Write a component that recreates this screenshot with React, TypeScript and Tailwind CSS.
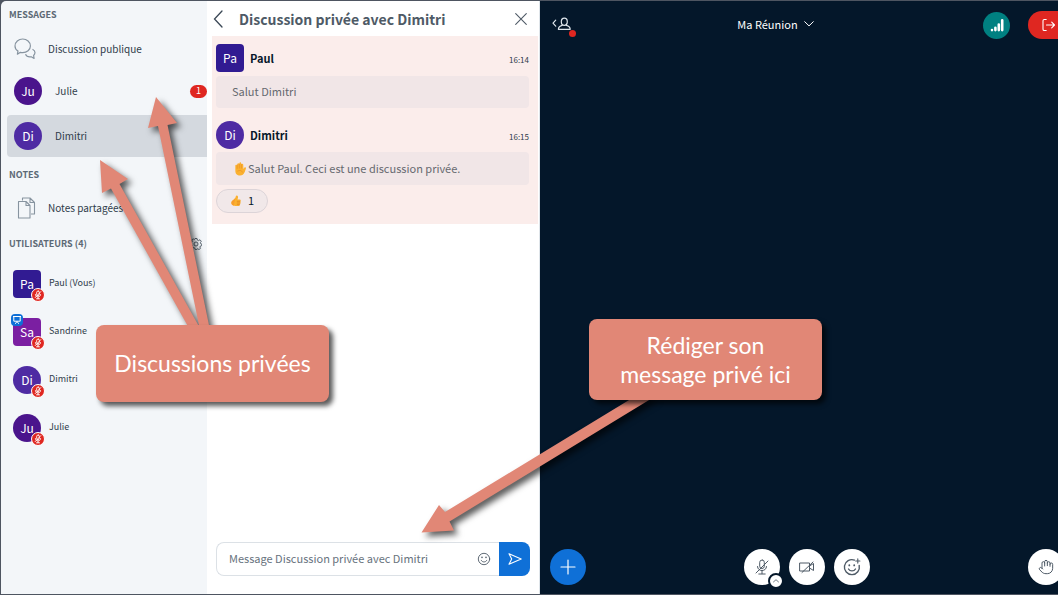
import type { ReactNode } from "react";

const avatarColors = {
  paul: "bg-[#311b92]",
  sandrine: "bg-[#7b1fa2]",
  dimitri: "bg-[#4e2ba3]",
  julie: "bg-[#4a148c]",
};

type Person = keyof typeof avatarColors;

function Avatar({ who, initials, square }: { who: Person; initials: string; square?: boolean }) {
  return (
    <span
      className={`flex size-7 shrink-0 items-center justify-center text-xs text-white ${avatarColors[who]} ${
        square ? "rounded" : "rounded-full"
      }`}
    >
      {initials}
    </span>
  );
}

function MutedBadge() {
  return (
    <span className="absolute -right-1 -bottom-1 flex size-3.5 items-center justify-center rounded-full border border-white bg-[#df2721]">
      <svg viewBox="0 0 12 12" className="size-3" fill="none" stroke="white" strokeWidth="0.9" strokeLinecap="round">
        <rect x="4.7" y="2" width="2.6" height="4.6" rx="1.3" />
        <path d="M3.4 5.6c0 3.2 5.2 3.2 5.2 0M6 8v1.7M4.5 9.8h3M3.2 8.6l5.6-6" />
      </svg>
    </span>
  );
}

function PresenterBadge() {
  return (
    <span className="absolute -top-1 -left-0.5 flex size-3 items-center justify-center rounded-sm bg-[#0f70d7]">
      <svg viewBox="0 0 12 12" className="size-3" fill="none" stroke="white" strokeWidth="1">
        <path d="M2 2.5h8M2.8 2.5v4.7h6.4V2.5M4.3 9.8L6 7.4l1.700 2.400" />
      </svg>
    </span>
  );
}

function Heading({ children }: { children: ReactNode }) {
  return <h2 className="h-5 pl-2 text-[9px] leading-5 font-bold text-[#5c6975]">{children}</h2>;
}

function UserRow(props: { who: Person; initials: string; name: string; square?: boolean; presenter?: boolean }) {
  return (
    <li className="flex h-12 items-center gap-2 pl-3 text-[9px]">
      <span className="relative">
        <Avatar who={props.who} initials={props.initials} square={props.square} />
        {props.presenter && <PresenterBadge />}
        <MutedBadge />
      </span>
      <span className="pb-0.5">{props.name}</span>
    </li>
  );
}

function Sidebar() {
  return (
    <nav className="flex w-[206px] shrink-0 flex-col bg-[#f3f6f9] pt-1 text-[10px] text-[#2f3c4a]">
      <Heading>MESSAGES</Heading>
      <div className="mt-1.5 flex flex-col gap-[3px]">
        <button className="flex h-9 items-center gap-3 pl-[13px] text-left">
          <svg viewBox="0 0 22 22" className="size-[22px]" fill="none" stroke="#8794a0" strokeWidth="1.2" strokeLinejoin="round">
            <path d="M4 12.9C2 11.700 1 10 1 7.900 1 4 4.600 1 8.700 1s7.700 3 7.700 6.900-3.600 6.700-7.700 6.700c-.8 0-1.600-.1-2.300-.3L3.400 16.200z" />
            <path d="M18.500 11.200c1.500.7 2.500 2 2.500 3.400 0 1.100-.5 2.100-1.400 2.900l.5 2.900-2.800-1.600c-2.500.4-5-.6-5.800-2.500" />
          </svg>
          <span className="pb-0.5">Discussion publique</span>
        </button>
        <button className="flex h-[42px] items-center pl-[13px] text-left">
          <Avatar who="julie" initials="Ju" />
          <span className="flex-1 pb-0.5 pl-[13px]">Julie</span>
          <span className="flex h-[13px] w-[17px] items-center justify-center rounded-full bg-[#df2721] text-[9px] text-white">1</span>
        </button>
        <button className="ml-1.5 flex h-[42px] items-center rounded-l bg-[#d4d9df] pl-[7px] text-left">
          <Avatar who="dimitri" initials="Di" />
          <span className="pb-0.5 pl-[13px]">Dimitri</span>
        </button>
      </div>
      <div className="mt-2">
        <Heading>NOTES</Heading>
      </div>
      <button className="mt-0.5 flex h-[42px] items-center gap-3 pl-4 text-left">
        <svg viewBox="0 0 19 22" className="h-[22px] w-[19px]" fill="none" stroke="#8794a0" strokeWidth="1.1" strokeLinejoin="round">
          <path d="M5.500 3.500V1h7.500l4.500 4.500V17h-3.500M13 1v4.500h4.500" />
          <path d="M1.500 4.500h7.500l4 4V21h-11.500zM9 4.500v4h4" />
        </svg>
        <span className="pb-0.5">Notes partagées</span>
      </button>
      <div className="mt-[5px] flex items-center justify-between pr-[5px]">
        <Heading>UTILISATEURS (4)</Heading>
        <button aria-label="Gérer les utilisateurs">
          <svg viewBox="0 0 24 24" className="size-3" fill="none" stroke="#4e5a66" strokeWidth="1.800">
            <circle cx="12" cy="12" r="4" />
            <path d="M10 1h4l.8 3.200 2.200 1 3-1.700 2.500 3-1.700 2.800.7 2.200 2 .7v3l-2.700.8-1 2.200 1.200 2.600-3 2.200-2.500-1.500-1.700.6L13.500 23h-3l-.8-2.800-2.200-1L4.700 20.500l-2.400-2.700 1.500-2.600-.8-2L1 12.200v-3l2.500-.8 1-2.200L3.400 3.800l3-2 2.400 1.400z" />
          </svg>
        </button>
      </div>
      <ul className="mt-1.5">
        <UserRow who="paul" initials="Pa" name="Paul (Vous)" square />
        <UserRow who="sandrine" initials="Sa" name="Sandrine" square presenter />
        <UserRow who="dimitri" initials="Di" name="Dimitri" />
        <UserRow who="julie" initials="Ju" name="Julie" />
      </ul>
    </nav>
  );
}

function MessageHeader(props: { who: Person; initials: string; name: string; time: string; square?: boolean }) {
  return (
    <div className="flex h-7 items-center gap-1.5">
      <Avatar who={props.who} initials={props.initials} square={props.square} />
      <span className="flex-1 text-[11px] font-bold text-[#06172a]">{props.name}</span>
      <time className="pt-1 text-[8px] text-[#2f3c4a]">{props.time}</time>
    </div>
  );
}

function HandEmoji() {
  return (
    <svg viewBox="0 0 24 24" className="size-3.5" role="img" aria-label="Main levée">
      <path
        d="M4 13V6.200c0-1.900 2.500-1.900 2.900 0L7.500 3.500c.2-2 2.900-2 3.200 0l.3-1.700c.3-1.800 3.100-1.700 3.200.2l.3 2c.3-1.700 2.900-1.500 3 .3L17.900 12l1.500-2.200c1.300-1.500 3.500-.3 2.700 1.700-1.300 3.500-2.200 8-5.300 10.500-2.600 2-8.500 1.800-10.800-.8C3.800 19 4 16 4 13z"
        fill="#fbb130"
      />
      <path d="M7.200 5v6M10.900 4v6.500M14.400 4.500v6M8 15.500c3-2 7-1.500 8.500 2" fill="none" stroke="#e98a20" strokeWidth="1" strokeLinecap="round" />
    </svg>
  );
}

function ThumbEmoji() {
  return (
    <svg viewBox="0 0 24 24" className="h-3.5 w-3" role="img" aria-label="Pouce levé">
      <path
        d="M3 13.500c1.500-2.500 5.500-4.500 7.500-7.500 1-1.600.8-4.500 2.500-5 2.500-.6 3.500 2 3 4.500-.3 1.600-1 3-.8 3.500h4.300c2.500 0 2.500 3.200.7 3.600 1.800.5 1.500 3.100-.2 3.400 1.400.6 1 3-.7 3.200.8 1.100 0 2.800-1.600 2.800H11c-3.500 0-7-1.500-8-4.500-.5-1.300-.5-2.800 0-4z"
        fill="#fbb130"
      />
      <path d="M14.500 12.600h5.300M14.500 16h5M14.500 19.200h4.300" stroke="#dc7b1b" strokeWidth="1.200" strokeLinecap="round" />
      <path d="M3 13.500c1.500-2.500 5.500-4.500 7.500-7.500.5 4-2.500 8-2.500 15.500-5-1.500-6.500-4.500-5-8z" fill="#f79329" opacity=".6" />
    </svg>
  );
}

function ChatPanel() {
  return (
    <section className="flex w-[333px] shrink-0 flex-col border-r border-[#dfe5ea] bg-white pl-[5px] text-[#4e5a66]">
      <header className="flex h-[35px] items-center pr-3 pl-px">
        <button aria-label="Masquer la discussion">
          <svg viewBox="0 0 10 18" className="h-[18px] w-2.5" fill="none" stroke="#3b4856" strokeWidth="1.300" strokeLinecap="round">
            <path d="M9 1L1.500 9 9 17" />
          </svg>
        </button>
        <h1 className="flex-1 pl-4 text-sm font-bold">Discussion privée avec Dimitri</h1>
        <button aria-label="Fermer la discussion">
          <svg viewBox="0 0 12 12" className="size-3" fill="none" stroke="#4e5a66" strokeWidth="1.100" strokeLinecap="round">
            <path d="M.7.700l10.600 10.600M11.300.700L.7 11.300" />
          </svg>
        </button>
      </header>
      <div className="mr-px bg-[#fbedeb] pt-2 pr-[9px] pb-[11px] pl-1 text-[11px]">
        <MessageHeader who="paul" initials="Pa" name="Paul" time="16:14" square />
        <p className="mt-1 flex h-8 items-center rounded bg-[#f1e6e7] pb-0.5 pl-4 text-[#66696f]">Salut Dimitri</p>
        <div className="mt-[13px]">
          <MessageHeader who="dimitri" initials="Di" name="Dimitri" time="16:15" />
        </div>
        <p className="mt-[3px] flex h-[33px] items-center rounded bg-[#f1e6e7] pl-[17px] text-[#66696f]">
          <HandEmoji />
          <span className="pl-px">Salut Paul. Ceci est une discussion privée.</span>
        </p>
        <button className="mt-1 flex h-6 w-[52px] items-center justify-center gap-1.5 rounded-full border border-[#dcd4d8] bg-[#f1e8e9] text-[#06172a]">
          <ThumbEmoji />
          <span className="pb-0.5">1</span>
        </button>
      </div>
      <form className="mt-auto mr-[9px] mb-[18px] ml-1 flex h-[34px]" onSubmit={(e) => e.preventDefault()}>
        <div className="flex min-w-0 flex-1 items-center rounded-l-lg border border-r-0 border-[#dce1e6] pr-2 pl-3">
          <input
            aria-label="Message"
            placeholder="Message Discussion privée avec Dimitri"
            className="min-w-0 flex-1 pb-0.5 text-[11px] outline-none placeholder:text-[#67727d]"
          />
          <button type="button" aria-label="Choisir un emoji">
            <svg viewBox="0 0 14 14" className="size-3.5" fill="none" stroke="#4e5a66" strokeWidth="0.9" strokeLinecap="round">
              <circle cx="7" cy="7" r="5.700" />
              <path d="M4.200 8.300c1.200 2.300 4.400 2.300 5.600 0" />
              <path d="M5 5.300v.1M9 5.300v.1" strokeWidth="1.500" />
            </svg>
          </button>
        </div>
        <button aria-label="Envoyer le message" className="flex w-[31px] items-center justify-center rounded-r-lg bg-[#0f70d7]">
          <svg viewBox="0 0 14 14" className="size-3.5" fill="none" stroke="white" strokeWidth="1.100" strokeLinejoin="round">
            <path d="M1 1.800L13.200 7 1 12.200 3.700 7z" />
          </svg>
        </button>
      </form>
    </section>
  );
}

function RoundButton({ label, children, blue }: { label: string; children: ReactNode; blue?: boolean }) {
  return (
    <button
      aria-label={label}
      className={`relative flex size-9 items-center justify-center rounded-full ${blue ? "bg-[#0f70d7]" : "bg-white"}`}
    >
      {children}
    </button>
  );
}

function Stage() {
  return (
    <main className="flex min-w-0 flex-1 overflow-hidden bg-[#04172a] text-white">
      <div className="-mr-4 flex flex-1 flex-col justify-between">
        <header className="flex items-center pt-2.5 pr-2.5 pl-3">
          <button aria-label="Afficher les utilisateurs" className="relative">
            <svg viewBox="0 0 20 16" className="h-4 w-5" fill="none" stroke="#dfe6ec" strokeWidth="1.200" strokeLinecap="round" strokeLinejoin="round">
              <path d="M3.700 3.200L1 6.200l2.700 3" />
              <ellipse cx="12.300" cy="4.700" rx="3" ry="3.600" />
              <path d="M10.200 8.300c-2.500.7-3.800 1.700-3.800 4h11.800c0-2.300-1.300-3.300-3.800-4" />
            </svg>
            <span className="absolute -right-1 -bottom-1 size-[7px] rounded-full bg-[#df2721]" />
          </button>
          <div className="flex flex-1 justify-center pr-1">
            <button className="flex items-center gap-1.5 pb-0.5 text-[11px]">
              Ma Réunion
              <svg viewBox="0 0 10 6" className="h-1.5 w-2.5" fill="none" stroke="white" strokeWidth="1" strokeLinecap="round">
                <path d="M.7.700L5 4.900 9.300.700" />
              </svg>
            </button>
          </div>
          <div className="flex items-center gap-[18px]">
            <button aria-label="État de la connexion" className="flex size-[27px] items-center justify-center rounded-full bg-[#008081]">
              <svg viewBox="0 0 14 14" className="size-3.5" fill="none" stroke="white" strokeWidth="2.600" strokeLinecap="round">
                <path d="M2 12v.1M5.400 9.800v2.300M8.800 6.500v5.600M12.200 2.200v9.900" />
              </svg>
            </button>
            <button aria-label="Quitter la réunion" className="flex h-7 w-9 items-center rounded-l-full bg-[#df2721] pl-3.5">
              <svg viewBox="0 0 14 14" className="size-3.5" fill="none" stroke="white" strokeWidth="1.100" strokeLinecap="round" strokeLinejoin="round">
                <path d="M4.200 1.500H2.300C1.500 1.500 1 2 1 2.800v8.400c0 .8.500 1.300 1.300 1.300h1.900M4.500 7h8M9.700 4.200L12.500 7 9.700 9.800" />
              </svg>
            </button>
          </div>
        </header>
        <footer className="flex items-center justify-between px-2.5 pb-[9px]">
          <div className="flex flex-1">
            <RoundButton label="Actions" blue>
              <svg viewBox="0 0 16 16" className="size-4" stroke="white" strokeWidth="1.200" strokeLinecap="round">
                <path d="M8 1v14M1 8h14" />
              </svg>
            </RoundButton>
          </div>
          <div className="flex gap-[9px]">
            <div className="relative">
              <RoundButton label="Activer le micro">
                <svg viewBox="0 0 16 16" className="size-4" fill="none" stroke="#4e5a66" strokeWidth="1" strokeLinecap="round">
                  <rect x="5.700" y="1" width="4.600" height="8.500" rx="2.300" />
                  <path d="M3.500 7.500c0 5.500 9 5.500 9 0M8 11.700v3M4.800 15h6.400M2 14L14 2" />
                </svg>
              </RoundButton>
              <button
                aria-label="Changer de périphérique audio"
                className="absolute -right-1 -bottom-1 flex size-4 items-center justify-center rounded-full border-2 border-[#04172a] bg-white"
              >
                <svg viewBox="0 0 8 8" className="size-2" fill="none" stroke="#4e5a66" strokeWidth="0.800">
                  <path d="M1.200 5.200L4 2.700l2.800 2.500" />
                </svg>
              </button>
            </div>
            <RoundButton label="Partager la webcam">
              <svg viewBox="0 0 16 16" className="size-4" fill="none" stroke="#4e5a66" strokeWidth="1" strokeLinecap="round" strokeLinejoin="round">
                <path d="M1 4h9.500v8H1zM10.500 7l4-2.500v7l-4-2.500M3 13.500L14 3" />
              </svg>
            </RoundButton>
            <RoundButton label="Réagir">
              <svg viewBox="0 0 18 18" className="size-[18px]" fill="none" stroke="#4e5a66" strokeWidth="1.400" strokeLinecap="round">
                <path d="M11.500 2.100A7.500 7.500 0 1 0 16.200 7.500M5.500 11c1.500 2.500 5.500 2.500 7 0" />
                <path d="M14.800.900v4.200M12.700 3h4.200" strokeWidth="1.100" />
                <path d="M6.300 7.200v.2M11.200 7.200v.2" strokeWidth="1.800" />
              </svg>
            </RoundButton>
          </div>
          <div className="flex flex-1 justify-end">
            <RoundButton label="Lever la main">
              <svg viewBox="0 0 24 24" className="size-4" fill="none" stroke="#4e5a66" strokeWidth="1.500" strokeLinecap="round" strokeLinejoin="round">
                <path d="M18 11V6a2 2 0 0 0-4 0M14 10V4a2 2 0 0 0-4 0v2M10 10.500V6a2 2 0 0 0-4 0v8" />
                <path d="M18 8a2 2 0 1 1 4 0v6a8 8 0 0 1-8 8h-2c-2.800 0-4.500-.86-5.990-2.340l-3.600-3.600a2 2 0 0 1 2.830-2.820L7 15" />
              </svg>
            </RoundButton>
          </div>
        </footer>
      </div>
    </main>
  );
}

function Annotations() {
  return (
    <div className="pointer-events-none absolute inset-0 overflow-hidden font-['Lato','Noto_Sans',sans-serif] text-[23px] leading-[29px] text-white">
      <svg className="absolute top-0 left-0 h-[595px] w-[1058px] drop-shadow-[4px_4px_3px_rgba(0,0,0,0.65)]" viewBox="0 0 1058 595" fill="#e18776">
        <path d="M156 97l21 26-9.500 2L210 330h-10L158 126l-10 2z" />
        <path d="M100 160l28 19-8.500 5L201 330h-11L111 188.500l-9 4.500z" />
        <path d="M421.500 532.500L439 505l6 7L634 397l20 0L449.500 521.500l4.500 9z" />
      </svg>
      <p className="absolute top-[325px] left-24 flex h-[77px] w-[233px] items-center justify-center rounded-lg bg-[#e18776] shadow-[4px_4px_5px_rgba(0,0,0,0.65)]">
        Discussions privées
      </p>
      <p className="absolute top-[319px] left-[589px] flex h-[81px] w-[233px] items-center justify-center rounded-lg bg-[#e18776] text-center shadow-[4px_4px_5px_rgba(0,0,0,0.65)]">
        Rédiger son
        <br />
        message privé ici
      </p>
    </div>
  );
}

export default function App() {
  return (
    <div className="relative h-screen min-h-[520px] overflow-hidden bg-[#4e5561] font-['Noto_Sans_CJK_SC','Noto_Sans',sans-serif]">
      <div className="flex h-full overflow-hidden rounded-tl-md border-y border-l border-[#4e5561]">
        <Sidebar />
        <ChatPanel />
        <Stage />
      </div>
      <Annotations />
    </div>
  );
}
